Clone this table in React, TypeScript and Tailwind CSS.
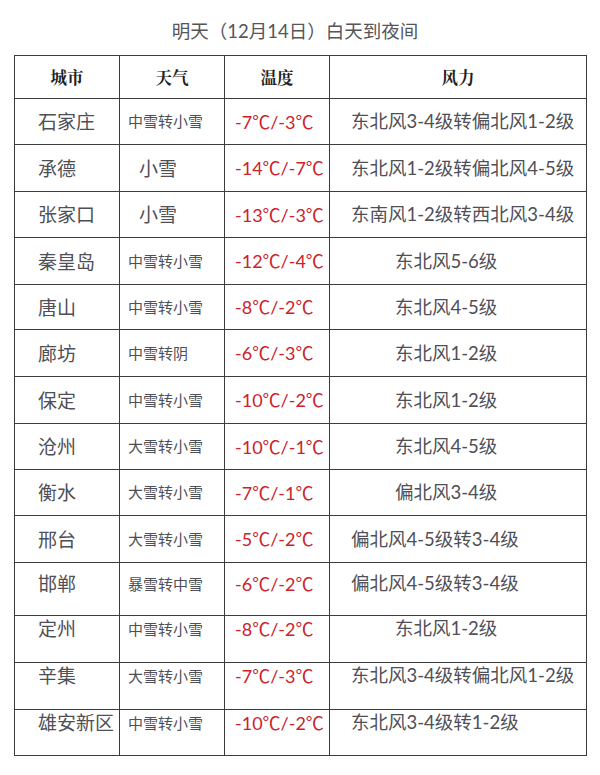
import React from "react";

type Row = {
  city: string;
  weather: string;
  big?: boolean;
  temp: string;
  wind: string;
  long: boolean;
  h: string;
  align: "center" | "top" | "top2";
};

const rows: Row[] = [
  { city: "石家庄", weather: "中雪转小雪", temp: "-7℃/-3℃", wind: "东北风3-4级转偏北风1-2级", long: true, h: "h-[46px]", align: "center" },
  { city: "承德", weather: "小雪", big: true, temp: "-14℃/-7℃", wind: "东北风1-2级转偏北风4-5级", long: true, h: "h-[47px]", align: "center" },
  { city: "张家口", weather: "小雪", big: true, temp: "-13℃/-3℃", wind: "东南风1-2级转西北风3-4级", long: true, h: "h-[46px]", align: "center" },
  { city: "秦皇岛", weather: "中雪转小雪", temp: "-12℃/-4℃", wind: "东北风5-6级", long: false, h: "h-[47px]", align: "center" },
  { city: "唐山", weather: "中雪转小雪", temp: "-8℃/-2℃", wind: "东北风4-5级", long: false, h: "h-[45px]", align: "center" },
  { city: "廊坊", weather: "中雪转阴", temp: "-6℃/-3℃", wind: "东北风1-2级", long: false, h: "h-[47px]", align: "center" },
  { city: "保定", weather: "中雪转小雪", temp: "-10℃/-2℃", wind: "东北风1-2级", long: false, h: "h-[47px]", align: "center" },
  { city: "沧州", weather: "大雪转小雪", temp: "-10℃/-1℃", wind: "东北风4-5级", long: false, h: "h-[46px]", align: "center" },
  { city: "衡水", weather: "大雪转小雪", temp: "-7℃/-1℃", wind: "偏北风3-4级", long: false, h: "h-[46px]", align: "center" },
  { city: "邢台", weather: "大雪转小雪", temp: "-5℃/-2℃", wind: "偏北风4-5级转3-4级", long: true, h: "h-[47px]", align: "center" },
  { city: "邯郸", weather: "暴雪转中雪", temp: "-6℃/-2℃", wind: "偏北风4-5级转3-4级", long: true, h: "h-[53px]", align: "top2" },
  { city: "定州", weather: "中雪转小雪", temp: "-8℃/-2℃", wind: "东北风1-2级", long: false, h: "h-[47px]", align: "top" },
  { city: "辛集", weather: "大雪转小雪", temp: "-7℃/-3℃", wind: "东北风3-4级转偏北风1-2级", long: true, h: "h-[47px]", align: "top" },
  { city: "雄安新区", weather: "中雪转小雪", temp: "-10℃/-2℃", wind: "东北风3-4级转1-2级", long: true, h: "h-[46px]", align: "top" },
];

const font = { fontFamily: '"Lato", "Noto Sans CJK SC", sans-serif' };
const cjk = { fontFamily: '"Noto Sans CJK SC", sans-serif' };

function Temp({ t }: { t: string }) {
  const parts = t.split("℃");
  return (
    <span>
      {parts.map((p, i) => (
        <React.Fragment key={i}>
          {p}
          {i < parts.length - 1 && <span style={cjk}>℃</span>}
        </React.Fragment>
      ))}
    </span>
  );
}

export default function App() {
  return (
    <div className="w-[600px] h-[775px] bg-white" style={font}>
      <div className="h-[55px] pt-[8px] pr-[10px] flex items-center justify-center text-[18.5px] text-[#55555c]">
        明天（12月14日）白天到夜间
      </div>
      <div className="ml-[14px] w-[573px] border-t border-l border-[#3c3c3c]">
        <div
          className="flex h-[43px] text-[16.5px] font-bold text-[#1e1e1e]"
          style={{ fontFamily: '"Noto Serif CJK SC", "Noto Sans CJK SC", sans-serif' }}
        >
          <div className="w-[105px] border-r border-b border-[#3c3c3c] flex items-center justify-center">城市</div>
          <div className="w-[105px] border-r border-b border-[#3c3c3c] flex items-center justify-center">天气</div>
          <div className="w-[105px] border-r border-b border-[#3c3c3c] flex items-center justify-center">温度</div>
          <div className="w-[257px] border-r border-b border-[#3c3c3c] flex items-center justify-center">风力</div>
        </div>
        {rows.map((r) => {
          const al =
            r.align === "center"
              ? "items-center"
              : r.align === "top2"
              ? "items-start pt-[8px]"
              : "items-start pt-0";
          return (
            <div key={r.city} className={`flex ${r.h} text-[#4f4f57]`}>
              <div className={`w-[105px] border-r border-b border-[#3c3c3c] flex ${al} pl-[23px] text-[19px] leading-[25px]`}>
                {r.city}
              </div>
              <div
                className={`w-[105px] border-r border-b border-[#3c3c3c] flex ${al} ${
                  r.big ? "pl-[19px] text-[19px]" : "pl-[8px] text-[15px]"
                } leading-[27px]`}
              >
                {r.weather}
              </div>
              <div className={`w-[105px] border-r border-b border-[#3c3c3c] flex ${al} pl-[10px] text-[18px] leading-[25px] text-[#cc2229]`}>
                <Temp t={r.temp} />
              </div>
              <div
                className={`w-[257px] border-r border-b border-[#3c3c3c] flex ${al} ${
                  r.long ? "pl-[21px]" : "pl-[65px]"
                } text-[18.5px] leading-[25px]`}
              >
                {r.wind}
              </div>
            </div>
          );
        })}
      </div>
    </div>
  );
}
